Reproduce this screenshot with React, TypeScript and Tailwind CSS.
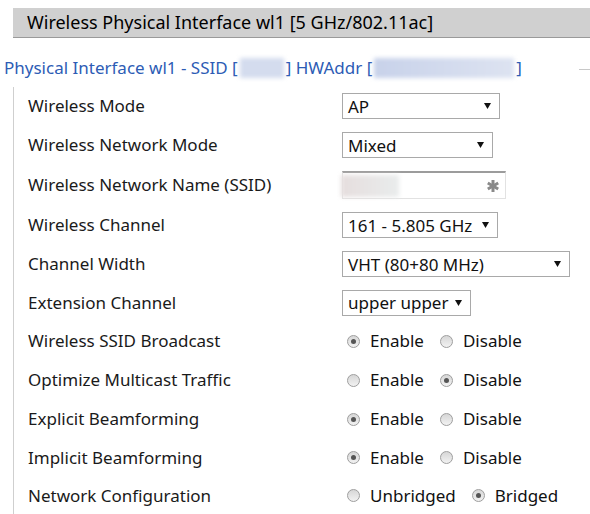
import React from 'react';

const font = { fontFamily: '"Noto Sans", "Open Sans", sans-serif' };

type SelectProps = { value: string; width: string };

const Select: React.FC<SelectProps> = ({ value, width }) => (
    <div className={`${width} h-[26px] flex items-center justify-between border border-[#a9a9a9] bg-white pl-[5px] pr-[8px] text-[17px] text-[#111]`}>
        <span className="leading-none">{value}</span>
        <svg width="7" height="6" viewBox="0 0 7 6">
            <polygon points="0,0 7,0 3.5,6" fill="#111" />
        </svg>
    </div>
);

const Radio: React.FC<{ checked?: boolean }> = ({ checked }) => (
    <span className="w-[13px] h-[13px] rounded-full border border-[#9e9e9e] bg-gradient-to-b from-[#d6d6d6] to-[#f2f2f2] flex items-center justify-center shrink-0">
        {checked && <span className="w-[5px] h-[5px] rounded-full bg-[#555]" />}
    </span>
);

type RadioPairProps = { a: string; b: string; sel: 0 | 1 };

const RadioPair: React.FC<RadioPairProps> = ({ a, b, sel }) => (
    <div className="flex items-center gap-[16px] text-[17px] text-[#111] pl-[5px]">
        <label className="flex items-center gap-[10px]">
            <Radio checked={sel === 0} />
            <span>{a}</span>
        </label>
        <label className="flex items-center gap-[10px]">
            <Radio checked={sel === 1} />
            <span>{b}</span>
        </label>
    </div>
);

type RowProps = { label: string; h?: string; children: React.ReactNode };

const Row: React.FC<RowProps> = ({ label, h = 'h-[39px]', children }) => (
    <div className={`${h} flex items-center`}>
        <div className="w-[314px] text-[17px] text-[#1a1a1a]">{label}</div>
        {children}
    </div>
);

// required-field marker inside the SSID box
const Required: React.FC = () => (
    <svg width="14" height="14" viewBox="0 0 14 14">
        <g stroke="#8a8a8a" strokeWidth="3" strokeLinecap="butt">
            <line x1="7" y1="1" x2="7" y2="13" />
            <line x1="1.8" y1="4" x2="12.2" y2="10" />
            <line x1="1.8" y1="10" x2="12.2" y2="4" />
        </g>
    </svg>
);

const App: React.FC = () => {
    return (
        <div className="w-[590px] h-[514px] bg-white overflow-hidden" style={font}>
            <div className="ml-[13px] mt-[8px] h-[30px] bg-[#d0d0d0] border-b border-[#9a9a9a] pl-[14px] flex items-center">
                <h2 className="text-[18px] text-black">Wireless Physical Interface wl1 [5 GHz/802.11ac]</h2>
            </div>

            <div className="mt-[17px] flex items-center">
                <div className="pl-[4px] text-[17px] text-[#2d5cb5] flex items-center whitespace-nowrap">
                    <span>Physical Interface wl1 - SSID [</span>
                    <span className="w-[44px] h-[20px] mx-[2px] bg-[#d4dcee] blur-[2px]" />
                    <span>] HWAddr [</span>
                    <span className="w-[140px] h-[20px] mx-[2px] bg-gradient-to-r from-[#c8d2ea] to-[#dde3f1] blur-[2px]" />
                    <span>]</span>
                </div>
                <div className="ml-[57px] flex-1 border-t border-[#c8c8c8] mt-[4px]" />
            </div>

            <div className="ml-[13px] mt-[6px] border-l border-[#cfcfcf] pl-[14px]">
                <Row label="Wireless Mode">
                    <Select value="AP" width="w-[158px]" />
                </Row>
                <Row label="Wireless Network Mode">
                    <Select value="Mixed" width="w-[151px]" />
                </Row>
                <Row label="Wireless Network Name (SSID)" h="h-[41px]">
                    <div className="w-[164px] h-[28px] border border-[#e2e2e2] border-t-2 border-t-[#9c9c9c] bg-white flex items-center justify-between pr-[5px]">
                        <span className="w-[58px] h-[22px] bg-gradient-to-r from-[#e6dede] to-[#e9ecec] blur-[2px] -ml-[2px]" />
                        <Required />
                    </div>
                </Row>
                <Row label="Wireless Channel">
                    <Select value="161 - 5.805 GHz" width="w-[156px]" />
                </Row>
                <Row label="Channel Width">
                    <Select value="VHT (80+80 MHz)" width="w-[228px]" />
                </Row>
                <Row label="Extension Channel" h="h-[38px]">
                    <Select value="upper upper" width="w-[129px]" />
                </Row>
                <Row label="Wireless SSID Broadcast">
                    <RadioPair a="Enable" b="Disable" sel={0} />
                </Row>
                <Row label="Optimize Multicast Traffic">
                    <RadioPair a="Enable" b="Disable" sel={1} />
                </Row>
                <Row label="Explicit Beamforming">
                    <RadioPair a="Enable" b="Disable" sel={0} />
                </Row>
                <Row label="Implicit Beamforming" h="h-[38px]">
                    <RadioPair a="Enable" b="Disable" sel={0} />
                </Row>
                <Row label="Network Configuration" h="h-[38px]">
                    <RadioPair a="Unbridged" b="Bridged" sel={1} />
                </Row>
            </div>
        </div>
    );
};

export default App;
